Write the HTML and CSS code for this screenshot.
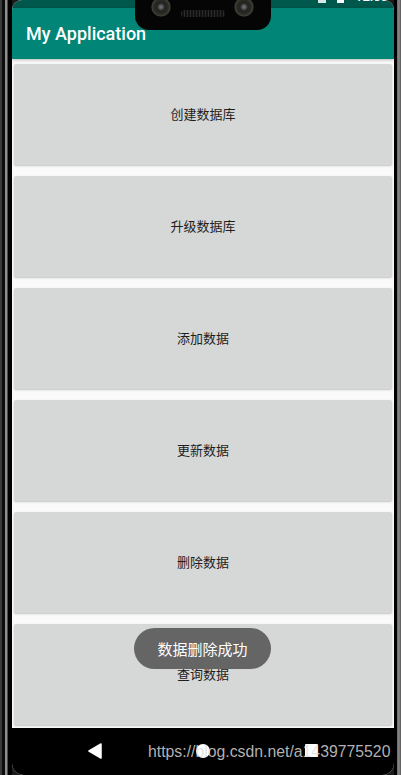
FILE: index.html
```html
<!DOCTYPE html>
<html>
<head>
<meta charset="utf-8">
<link rel="stylesheet" href="styles.css">
</head>
<body>
<div class="phone">
  <div class="bezel-left"></div>
  <div class="screen">
    <div class="statusbar">
      <span class="st-icon st-a"></span>
      <span class="st-icon st-b"></span>
      <span class="st-time">12:00</span>
    </div>
    <div class="appbar">My Application</div>
    <div class="content">
      <div class="btn">创建数据库</div>
      <div class="btn">升级数据库</div>
      <div class="btn">添加数据</div>
      <div class="btn">更新数据</div>
      <div class="btn">删除数据</div>
      <div class="btn">查询数据</div>
    </div>
    <div class="navbar">
      <svg class="nav-back" width="14" height="16" viewBox="0 0 14 16"><path d="M13 1 L1 8 L13 15 Z" fill="#fff" stroke="#fff" stroke-linejoin="round" stroke-width="1.5"/></svg>
      <span class="nav-home"></span>
      <span class="nav-recent"></span>
      <span class="watermark">https://blog.csdn.net/a1439775520</span>
    </div>
    <div class="notch">
      <span class="cam cam-l"></span>
      <span class="speaker"></span>
      <span class="cam cam-r"></span>
    </div>
    <div class="toast">数据删除成功</div>
  </div>
  <div class="bezel-right"></div>
</div>
</body>
</html>
```

FILE: styles.css
```css
html, body {
  margin: 0;
  padding: 0;
  background: #1b1b1b;
}
body {
  width: 401px;
  height: 775px;
  overflow: hidden;
  font-family: "Noto Sans CJK SC", "Noto Sans", sans-serif;
}
.phone {
  display: flex;
  width: 401px;
  height: 775px;
}
.bezel-left {
  width: 12px;
  flex: none;
  background: linear-gradient(to right, #3a3a3a 0, #3a3a3a 2px, #0c0c0c 2px, #0c0c0c 5px, #8e8e8e 5px, #8e8e8e 7px, #4a4a4a 7px, #4a4a4a 8px, #000 8px);
}
.bezel-right {
  width: 7px;
  flex: none;
  background: linear-gradient(to right, #000 0, #000 3px, #6a6a6a 3px, #8a8a8a 5px, #555 7px);
}
.screen {
  position: relative;
  flex: 1;
  display: flex;
  flex-direction: column;
  background: #fafafa;
  border-radius: 10px 10px 12px 12px;
  overflow: hidden;
}
.statusbar {
  height: 8px;
  background: #00574b;
  position: relative;
}
.st-icon {
  position: absolute;
  top: 0;
  height: 3px;
  background: #fff;
}
.st-a { left: 306px; width: 8px; background: #d8e8e4; }
.st-b { left: 325px; width: 7px; }
.st-time {
  position: absolute;
  left: 343px;
  top: -11px;
  color: #fff;
  font-family: Roboto, sans-serif;
  font-size: 13px;
  font-weight: 500;
}
.appbar {
  height: 51px;
  background: #008577;
  color: #fff;
  font-family: Roboto, sans-serif;
  font-weight: 500;
  font-size: 18px;
  padding-left: 14px;
  line-height: 52px;
  box-sizing: border-box;
  box-shadow: 0 1px 3px rgba(0,0,0,0.25);
  z-index: 1;
}
.content {
  flex: 1;
  display: flex;
  flex-direction: column;
  gap: 11px;
  padding: 5px 2px 0 2px;
  background: #fafafa;
}
.btn {
  height: 101px;
  box-sizing: border-box;
  padding-bottom: 2px;
  background: #d6d7d7;
  border-radius: 2px;
  box-shadow: 0 1px 2px rgba(0,0,0,0.22);
  display: flex;
  align-items: center;
  justify-content: center;
  font-size: 13px;
  color: #1e1e1e;
  flex: none;
}
.navbar {
  height: 47px;
  flex: none;
  background: #000;
  position: relative;
}
.nav-back {
  position: absolute;
  left: 76px;
  top: 15px;
}
.nav-home {
  position: absolute;
  left: 184px;
  top: 16px;
  width: 14px;
  height: 14px;
  border-radius: 50%;
  background: #fff;
}
.nav-recent {
  position: absolute;
  left: 293px;
  top: 16px;
  width: 13px;
  height: 13px;
  border-radius: 1px;
  background: #fff;
}
.watermark {
  position: absolute;
  left: 136px;
  top: 15px;
  font-family: "Liberation Sans", Arial, sans-serif;
  font-size: 15.8px;
  color: rgba(220,220,220,0.82);
  white-space: nowrap;
}
.notch {
  position: absolute;
  left: 123px;
  top: 0;
  width: 136px;
  height: 30px;
  background: #050505;
  border-radius: 0 0 14px 14px;
  z-index: 3;
}
.cam {
  position: absolute;
  top: -3px;
  width: 20px;
  height: 20px;
  border-radius: 50%;
  background: radial-gradient(circle at 50% 50%, #777 0, #555 2px, #222 4px, #2b2a22 7px, #40403a 9px, #111 10px);
}
.cam-l { left: 16px; }
.cam-r { left: 99px; }
.speaker {
  position: absolute;
  left: 46px;
  top: 10px;
  width: 44px;
  height: 7px;
  border-radius: 4px;
  background: repeating-linear-gradient(to right, #2a2a2a 0, #2a2a2a 1px, #111 1px, #111 3px);
}
.toast {
  position: absolute;
  left: 122px;
  top: 628px;
  width: 137px;
  height: 41px;
  border-radius: 21px;
  background: #656565;
  color: #fff;
  font-size: 15px;
  display: flex;
  align-items: center;
  justify-content: center;
  z-index: 2;
}
```
